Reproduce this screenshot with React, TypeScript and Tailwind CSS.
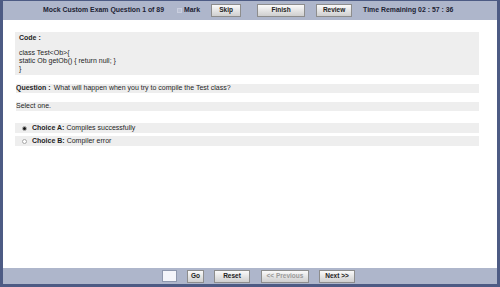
import React from "react"

function Btn({ label, w, disabled }: { label: string; w: string; disabled?: boolean }) {
    return <div className={`${w} h-[13px] flex items-center justify-center border border-[#8d8d8d] bg-gradient-to-b from-[#fafafa] to-[#cfcfcf] text-[6.5px] font-bold leading-none ${disabled ? 'text-[#9a9a9a]' : 'text-[#222]'}`}>
        {label}
    </div>
}

export default function App() {
    return <div className="w-[500px] h-[287px] flex flex-col border-t border-l-[3px] border-r-[3px] border-b-[3px] border-[#4d5b84] bg-white font-['Liberation_Sans',Arial,sans-serif] text-[#1e1e1e]">
        {/* header */}
        <header className="h-[19px] shrink-0 flex items-center pl-[40px] bg-[#aeb6cb] text-[6.9px] font-bold text-[#1c2233]">
            <span>Mock Custom Exam Question 1 of 89</span>
            <span className="ml-[13px] w-[5px] h-[5px] border border-[#c9cede] bg-[#b9c0d3]"></span>
            <span className="ml-[2px]">Mark</span>
            <div className="ml-[11px]"><Btn label="Skip" w="w-[30px]" /></div>
            <div className="ml-[16px]"><Btn label="Finish" w="w-[48px]" /></div>
            <div className="ml-[11px]"><Btn label="Review" w="w-[36px]" /></div>
            <span className="ml-[11px]">Time Remaining 02 : 57 : 36</span>
        </header>

        {/* body */}
        <main className="flex-1 pt-[12px] pl-[12px] pr-[18px] text-[7px]">
            <div className="bg-[#eeeeee] pt-[2px] pb-[2px] pl-[4px] leading-[8px]">
                <div className="font-bold">Code :</div>
                <div className="h-[7px]"></div>
                <div>class Test&lt;Ob&gt;{'{'}</div>
                <div>static Ob getOb() {'{'} return null; {'}'}</div>
                <div>{'}'}</div>
            </div>
            <div className="mt-[9px] ml-[1px] h-[9px] flex items-center bg-[#eeeeee]">
                <span className="font-bold">Question :</span>
                <span className="ml-[3px]">What will happen when you try to compile the Test class?</span>
            </div>
            <div className="mt-[9px] ml-[1px] h-[9px] flex items-center bg-[#eeeeee]">
                Select one.
            </div>
            <div className="mt-[12px] flex flex-col gap-[3px]">
                <div className="h-[10px] flex items-center bg-[#eeeeee] pl-[7px]">
                    <span className="w-[5px] h-[5px] rounded-full border border-[#9a9a9a] bg-white flex items-center justify-center">
                        <span className="w-[3px] h-[3px] rounded-full bg-[#111]"></span>
                    </span>
                    <span className="ml-[5px] font-bold">Choice A:</span>
                    <span className="ml-[2px]">Compiles successfully</span>
                </div>
                <div className="h-[10px] flex items-center bg-[#eeeeee] pl-[7px]">
                    <span className="w-[5px] h-[5px] rounded-full border border-[#a8a8a8] bg-white"></span>
                    <span className="ml-[5px] font-bold">Choice B:</span>
                    <span className="ml-[2px]">Compiler error</span>
                </div>
            </div>
        </main>

        {/* footer */}
        <footer className="h-[16px] shrink-0 flex items-center pl-[159px] bg-[#aeb6cb]">
            <div className="w-[15px] h-[12px] border border-[#8e97ad] bg-[#f4f5fa]"></div>
            <div className="ml-[10px]"><Btn label="Go" w="w-[17px]" /></div>
            <div className="ml-[10px]"><Btn label="Reset" w="w-[36px]" /></div>
            <div className="ml-[11px]"><Btn label="<< Previous" w="w-[48px]" disabled /></div>
            <div className="ml-[10px]"><Btn label="Next >>" w="w-[36px]" /></div>
        </footer>
    </div>
}
